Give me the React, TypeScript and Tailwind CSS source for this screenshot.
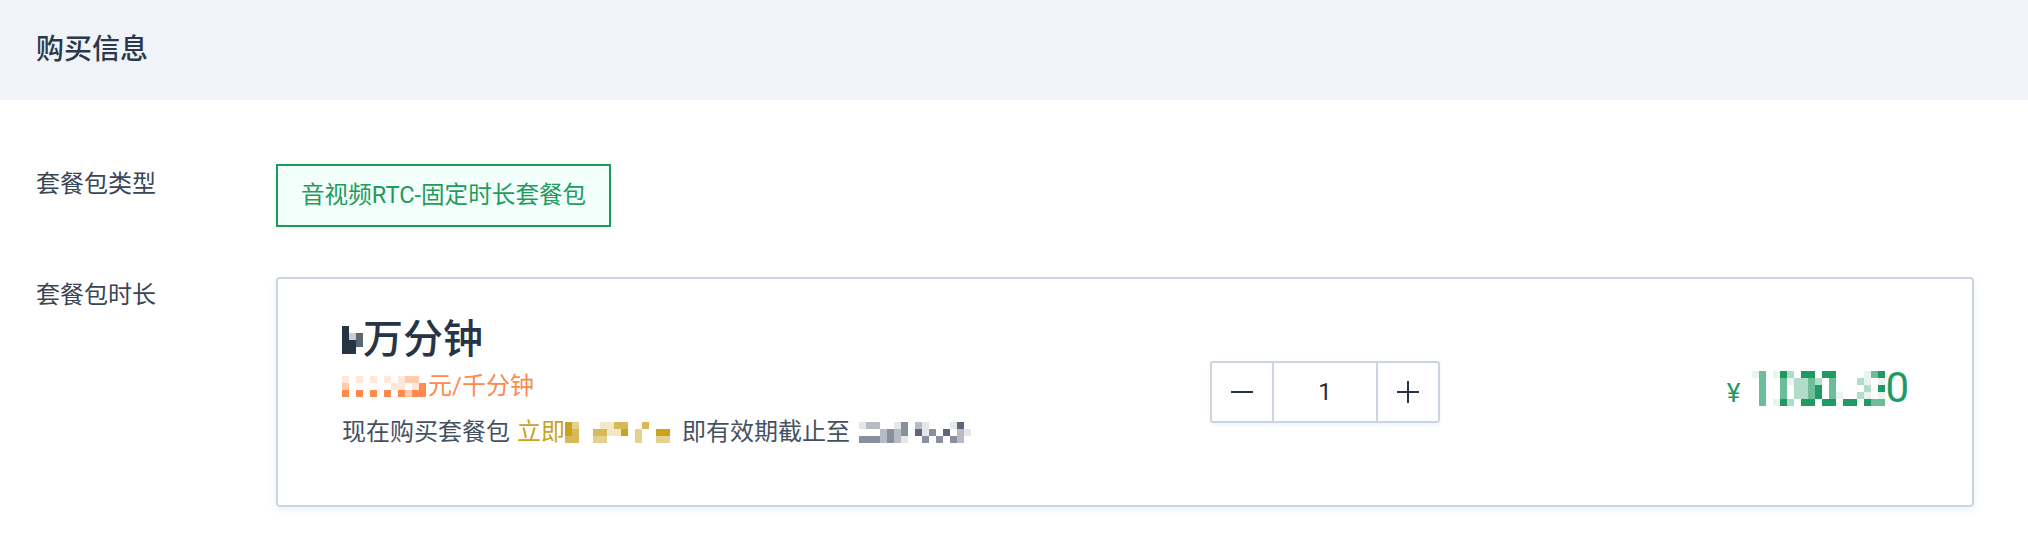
import React from "react";

const palettes: Record<string, string[]> = {
  dark: ["", "bg-[#263445]/25", "bg-[#263445]/50", "bg-[#263445]/75", "bg-[#263445]"],
  orange: ["", "bg-[#ff8a4c]/20", "bg-[#ff8a4c]/45", "bg-[#ff8a4c]/70", "bg-[#ff8a4c]"],
  gold: ["", "bg-[#c9a21f]/25", "bg-[#c9a21f]/50", "bg-[#c9a21f]/75", "bg-[#c9a21f]"],
  gray: ["", "bg-[#4a5568]/15", "bg-[#4a5568]/40", "bg-[#4a5568]/65", "bg-[#4a5568]/90"],
  green: ["", "bg-[#1f9a63]/10", "bg-[#1f9a63]/35", "bg-[#1f9a63]/65", "bg-[#1f9a63]"],
};

// blurred-out bits of the screenshot, drawn as blocks
const Mosaic = ({ rows, tone, cell }: { rows: string[]; tone: string; cell: string }) => {
  const colors = palettes[tone];
  return (
    <div className="flex flex-col">
      {rows.map((r, i) => (
        <div key={i} className="flex">
          {r.split("").map((c, j) => (
            <div key={j} className={`${cell} ${colors[Number(c)]}`} />
          ))}
        </div>
      ))}
    </div>
  );
};

const Stepper = () => {
  return (
    <div className="flex h-[62px] w-[230px] rounded-[3px] border-2 border-[#cbd5e1] shadow-[0_2px_4px_rgba(15,40,80,0.06)]">
      <div className="flex w-[62px] items-center justify-center border-r-2 border-[#cbd5e1]">
        <div className="h-[2px] w-[22px] bg-[#263445]" />
      </div>
      <div className="flex flex-1 items-center justify-center text-[24px] text-[#1f2d3d]">1</div>
      <div className="relative flex w-[62px] items-center justify-center border-l-2 border-[#cbd5e1]">
        <div className="h-[2px] w-[22px] bg-[#263445]" />
        <div className="absolute h-[22px] w-[2px] bg-[#263445]" />
      </div>
    </div>
  );
};

export default function App() {
  return (
    <div className="h-[556px] w-[2028px] bg-white font-['Roboto','Noto_Sans_CJK_SC',sans-serif]">
      <div className="flex h-[100px] items-center bg-[#f0f3f8] pl-[36px]">
        <h2 className="text-[28px] font-medium leading-none text-[#2b3a4b]">购买信息</h2>
      </div>

      <div className="flex flex-col gap-[50px] pl-[36px] pt-[64px]">
        <div className="flex">
          <div className="mt-[4px] w-[240px] text-[24px] leading-[32px] text-[#3a4555]">套餐包类型</div>
          <button className="flex h-[63px] items-center border-2 border-[#1b9b5e] bg-[#f2fffb] px-[23px] text-[23.6px] text-[#1f9b5d] shadow-[0_2px_4px_rgba(0,0,0,0.05)]">
            音视频RTC-固定时长套餐包
          </button>
        </div>

        <div className="flex">
          <div className="mt-[2px] w-[240px] text-[24px] leading-[32px] text-[#3a4555]">套餐包时长</div>
          <div className="flex h-[230px] w-[1698px] items-center rounded-[4px] border-2 border-[#cbd5e1] pl-[64px] shadow-[0_3px_8px_rgba(15,40,80,0.07)]">
            <div className="mt-[-22px] w-[868px]">
              <div className="flex h-[52px] items-center">
                <Mosaic tone="dark" cell="w-[7px] h-[7px]" rows={["400", "413", "443", "440"]} />
                <span className="text-[40px] font-medium leading-[52px] text-[#263445]">万分钟</span>
              </div>
              <div className="mt-[4px] flex h-[32px] items-center">
                <Mosaic
                  tone="orange"
                  cell="w-[7px] h-[7px]"
                  rows={["101010101220", "200000011014", "404040404244"]}
                />
                <span className="ml-[2px] text-[24px] leading-[32px] text-[#ff8a4c]">元/千分钟</span>
              </div>
              <div className="mt-[14px] flex h-[32px] items-center text-[24px] leading-[32px] text-[#46515f]">
                <span>现在购买套餐包</span>
                <span className="ml-[7px] text-[#c9a21f]">立即</span>
                <Mosaic
                  tone="gold"
                  cell="w-[7px] h-[7px]"
                  rows={["420001133003000", "430033114020044", "330022000020022"]}
                />
                <span className="ml-[12px]">即有效期截止至</span>
                <div className="ml-[9px]">
                  <Mosaic
                    tone="gray"
                    cell="w-[7px] h-[7px]"
                    rows={["12200130210001400", "00023230413040210", "33323210030303200"]}
                  />
                </div>
              </div>
            </div>

            <Stepper />

            <div className="mb-[8px] flex flex-1 justify-end pr-[63px]">
              <div className="flex h-[40px] items-center text-[#1f9a63]">
                <span className="mr-[12px] mt-[10px] text-[26px] leading-none">¥</span>
                <Mosaic
                  tone="green"
                  cell="w-[7px] h-[7px]"
                  rows={[
                    "1301420440440000134",
                    "0300312232030002101",
                    "0300302234030000204",
                    "0300302234031002101",
                    "0301420440440440433",
                  ]}
                />
                <span className="text-[42px] leading-[40px]">0</span>
              </div>
            </div>
          </div>
        </div>
      </div>
    </div>
  );
}
